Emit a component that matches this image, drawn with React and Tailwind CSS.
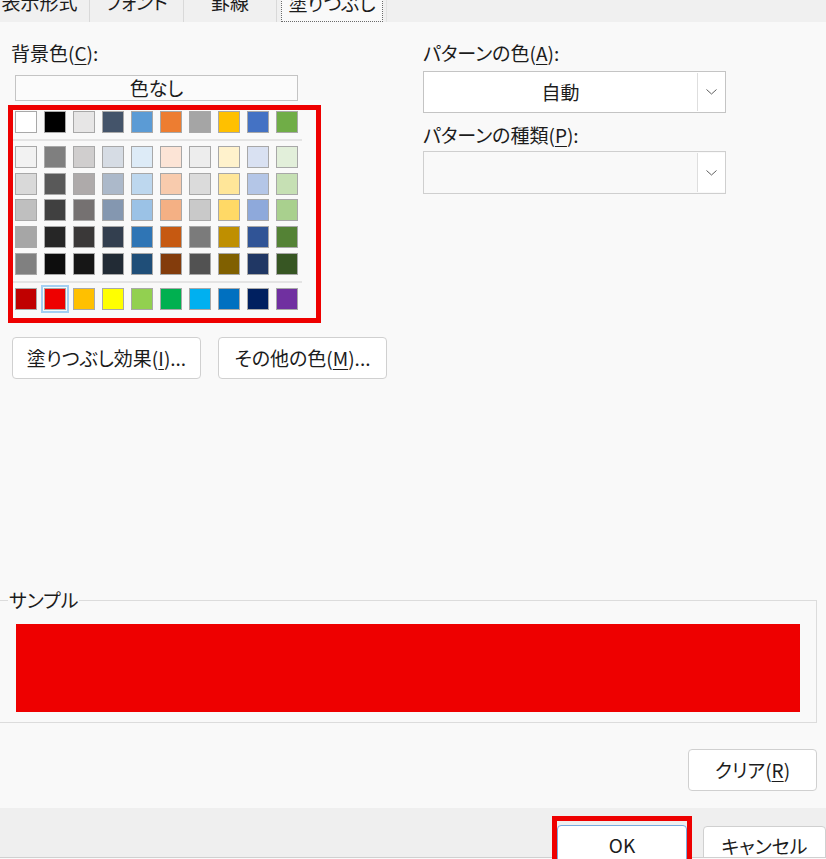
import React from 'react';

const themeRow = ['bg-[#ffffff]', 'bg-[#000000]', 'bg-[#e7e6e6]', 'bg-[#44546a]', 'bg-[#5b9bd5]', 'bg-[#ed7d31]', 'bg-[#a5a5a5]', 'bg-[#ffc000]', 'bg-[#4472c4]', 'bg-[#70ad47]'];

const shadeRows = [
  ['bg-[#f2f2f2]', 'bg-[#7f7f7f]', 'bg-[#d0cece]', 'bg-[#d6dce4]', 'bg-[#ddebf7]', 'bg-[#fce4d6]', 'bg-[#ededed]', 'bg-[#fff2cc]', 'bg-[#d9e1f2]', 'bg-[#e2efda]'],
  ['bg-[#d9d9d9]', 'bg-[#595959]', 'bg-[#aeaaaa]', 'bg-[#acb9ca]', 'bg-[#bdd7ee]', 'bg-[#f8cbad]', 'bg-[#dbdbdb]', 'bg-[#ffe699]', 'bg-[#b4c6e7]', 'bg-[#c6e0b4]'],
  ['bg-[#bfbfbf]', 'bg-[#404040]', 'bg-[#757171]', 'bg-[#8497b0]', 'bg-[#9bc2e6]', 'bg-[#f4b084]', 'bg-[#c9c9c9]', 'bg-[#ffd966]', 'bg-[#8ea9db]', 'bg-[#a9d08e]'],
  ['bg-[#a6a6a6]', 'bg-[#262626]', 'bg-[#3a3838]', 'bg-[#333f4f]', 'bg-[#2f75b5]', 'bg-[#c65911]', 'bg-[#7b7b7b]', 'bg-[#bf8f00]', 'bg-[#305496]', 'bg-[#548235]'],
  ['bg-[#808080]', 'bg-[#0d0d0d]', 'bg-[#161616]', 'bg-[#222b35]', 'bg-[#1f4e78]', 'bg-[#833c0c]', 'bg-[#525252]', 'bg-[#806000]', 'bg-[#203764]', 'bg-[#375623]'],
];

const standardRow = ['bg-[#c00000]', 'bg-[#ee0000]', 'bg-[#ffc000]', 'bg-[#ffff00]', 'bg-[#92d050]', 'bg-[#00b050]', 'bg-[#00b0f0]', 'bg-[#0070c0]', 'bg-[#002060]', 'bg-[#7030a0]'];

function Swatch({ color, selected }) {
  return (
    <div
      className={`w-[22px] h-[22px] border border-[#a8a8a8] ${color} ${
        selected ? 'outline-2 outline-offset-[1px] outline-[#a3cff3]' : ''
      }`}
    />
  );
}

function SwatchRow({ colors, selectedIndex = -1 }) {
  return (
    <div className="flex gap-[7px]">
      {colors.map((c, i) => (
        <Swatch key={i} color={c} selected={i === selectedIndex} />
      ))}
    </div>
  );
}

function Key({ children }) {
  return <span className="underline underline-offset-[3px]">{children}</span>;
}

function Chevron() {
  return (
    <svg width="11" height="6" viewBox="0 0 11 6" fill="none">
      <polyline points="0.5,0.5 5.5,5 10.5,0.5" stroke="#5f5f5f" strokeWidth="1" />
    </svg>
  );
}

function Dropdown({ value, muted }) {
  return (
    <div className={`w-[303px] flex border ${muted ? 'h-[43px] bg-[#f9f9f9] border-[#cfcfcf]' : 'h-[42px] bg-white border-[#c4c4c4]'}`}>
      <div className="flex-1 flex items-center justify-center">{value}</div>
      <div className="w-[28px] my-[1px] bg-white border-l border-[#dedede] flex items-center justify-center">
        <Chevron />
      </div>
    </div>
  );
}

function Button({ className, children }) {
  return (
    <div className={`h-[42px] bg-white border border-[#d0d0d0] rounded-[4px] flex items-center justify-center ${className}`}>
      {children}
    </div>
  );
}

export default function App() {
  return (
    <div className="w-[826px] h-[859px] overflow-hidden flex flex-col bg-[#f9f9f9] text-[#1c1c1c] text-[19px] font-['Noto_Sans_CJK_JP','Noto_Sans',sans-serif] [font-feature-settings:'palt']">
      {/* tab strip, top cut off by the capture */}
      <div className="-mt-[11px] h-[33px] shrink-0 flex bg-[#f0f0f0] leading-[26px]">
        <div className="-ml-[10px] w-[100px] text-center border-r border-[#d9d9d9]">表示形式</div>
        <div className="w-[94px] text-center border-r border-[#d9d9d9]">フォント</div>
        <div className="w-[93px] text-center border-r border-[#d9d9d9]">罫線</div>
        <div className="ml-[4px] w-[102px] text-center bg-[#f9f9f9] border border-dotted border-[#6a6a6a]">塗りつぶし</div>
        <div className="flex-1 ml-[3px] border-l border-[#e2e2e2]" />
      </div>

      <div className="flex shrink-0">
        {/* left column */}
        <div className="w-[423px] pl-[8px] flex flex-col">
          <div className="mt-[18px] h-[26px] leading-[26px] pl-[3px]">
            背景色(<Key>C</Key>):
          </div>
          <div className="mt-[9px] ml-[7px] w-[283px] h-[26px] border border-[#c4c4c4] bg-[#fbfbfb] flex items-center justify-center">
            色なし
          </div>
          <div className="mt-[4px] w-[313px] h-[218px] border-[5px] border-[#ee0000] pl-[2px] pt-[1px] flex flex-col">
            <SwatchRow colors={themeRow} />
            <div className="mt-[6px] -ml-[2px] w-[289px] h-[2px] bg-[#e4e4e4]" />
            <div className="mt-[5px] flex flex-col gap-[4.67px]">
              {shadeRows.map((row, i) => (
                <SwatchRow key={i} colors={row} />
              ))}
            </div>
            <div className="mt-[6px] -ml-[2px] w-[289px] h-[2px] bg-[#e4e4e4]" />
            <div className="mt-[5px]">
              <SwatchRow colors={standardRow} selectedIndex={1} />
            </div>
          </div>
          <div className="mt-[14px] ml-[4px] flex gap-[17px]">
            <Button className="w-[189px]">
              塗りつぶし効果(<Key>I</Key>)...
            </Button>
            <Button className="w-[169px]">
              その他の色(<Key>M</Key>)...
            </Button>
          </div>
        </div>

        {/* right column */}
        <div className="w-[303px] flex flex-col">
          <div className="mt-[18px] h-[26px] leading-[26px]">
            パターンの色(<Key>A</Key>):
          </div>
          <div className="mt-[5px]">
            <Dropdown value="自動" />
          </div>
          <div className="mt-[9px] h-[26px] leading-[26px]">
            パターンの種類(<Key>P</Key>):
          </div>
          <div className="mt-[3px]">
            <Dropdown value="" muted />
          </div>
        </div>
      </div>

      <fieldset className="mt-[208px] -ml-[1px] w-[818px] shrink-0 border border-[#dcdcdc] pb-[10px]">
        <legend className="ml-[8px] px-[1px] h-[26px] leading-[26px]">サンプル</legend>
        <div className="mt-[11px] ml-[16px] w-[784px] h-[88px] bg-[#ee0000]" />
      </fieldset>

      <div className="mt-[26px] self-end mr-[9px] shrink-0">
        <Button className="w-[129px]">
          クリア(<Key>R</Key>)
        </Button>
      </div>

      <div className="mt-[17px] h-[51px] shrink-0 relative overflow-hidden bg-[#efefef] flex items-start">
        <div className="relative z-10 ml-[552px] mt-[8px] w-[141px] h-[60px] border-[5px] border-b-0 border-[#ee0000] pt-[4px]">
          <div className="w-[130px] h-[41px] bg-white border border-[#78aade] rounded-[4px] flex items-center justify-center">
            OK
          </div>
        </div>
        <div className="ml-[11px] mt-[18px] w-[130px] h-[41px] bg-white border border-[#d0d0d0] rounded-[4px] flex items-center justify-center">
          キャンセル
        </div>
        <div className="absolute left-0 right-0 bottom-0 h-[2px] border-t border-[#d0d0d0] bg-[#fafafa]" />
      </div>
    </div>
  );
}
